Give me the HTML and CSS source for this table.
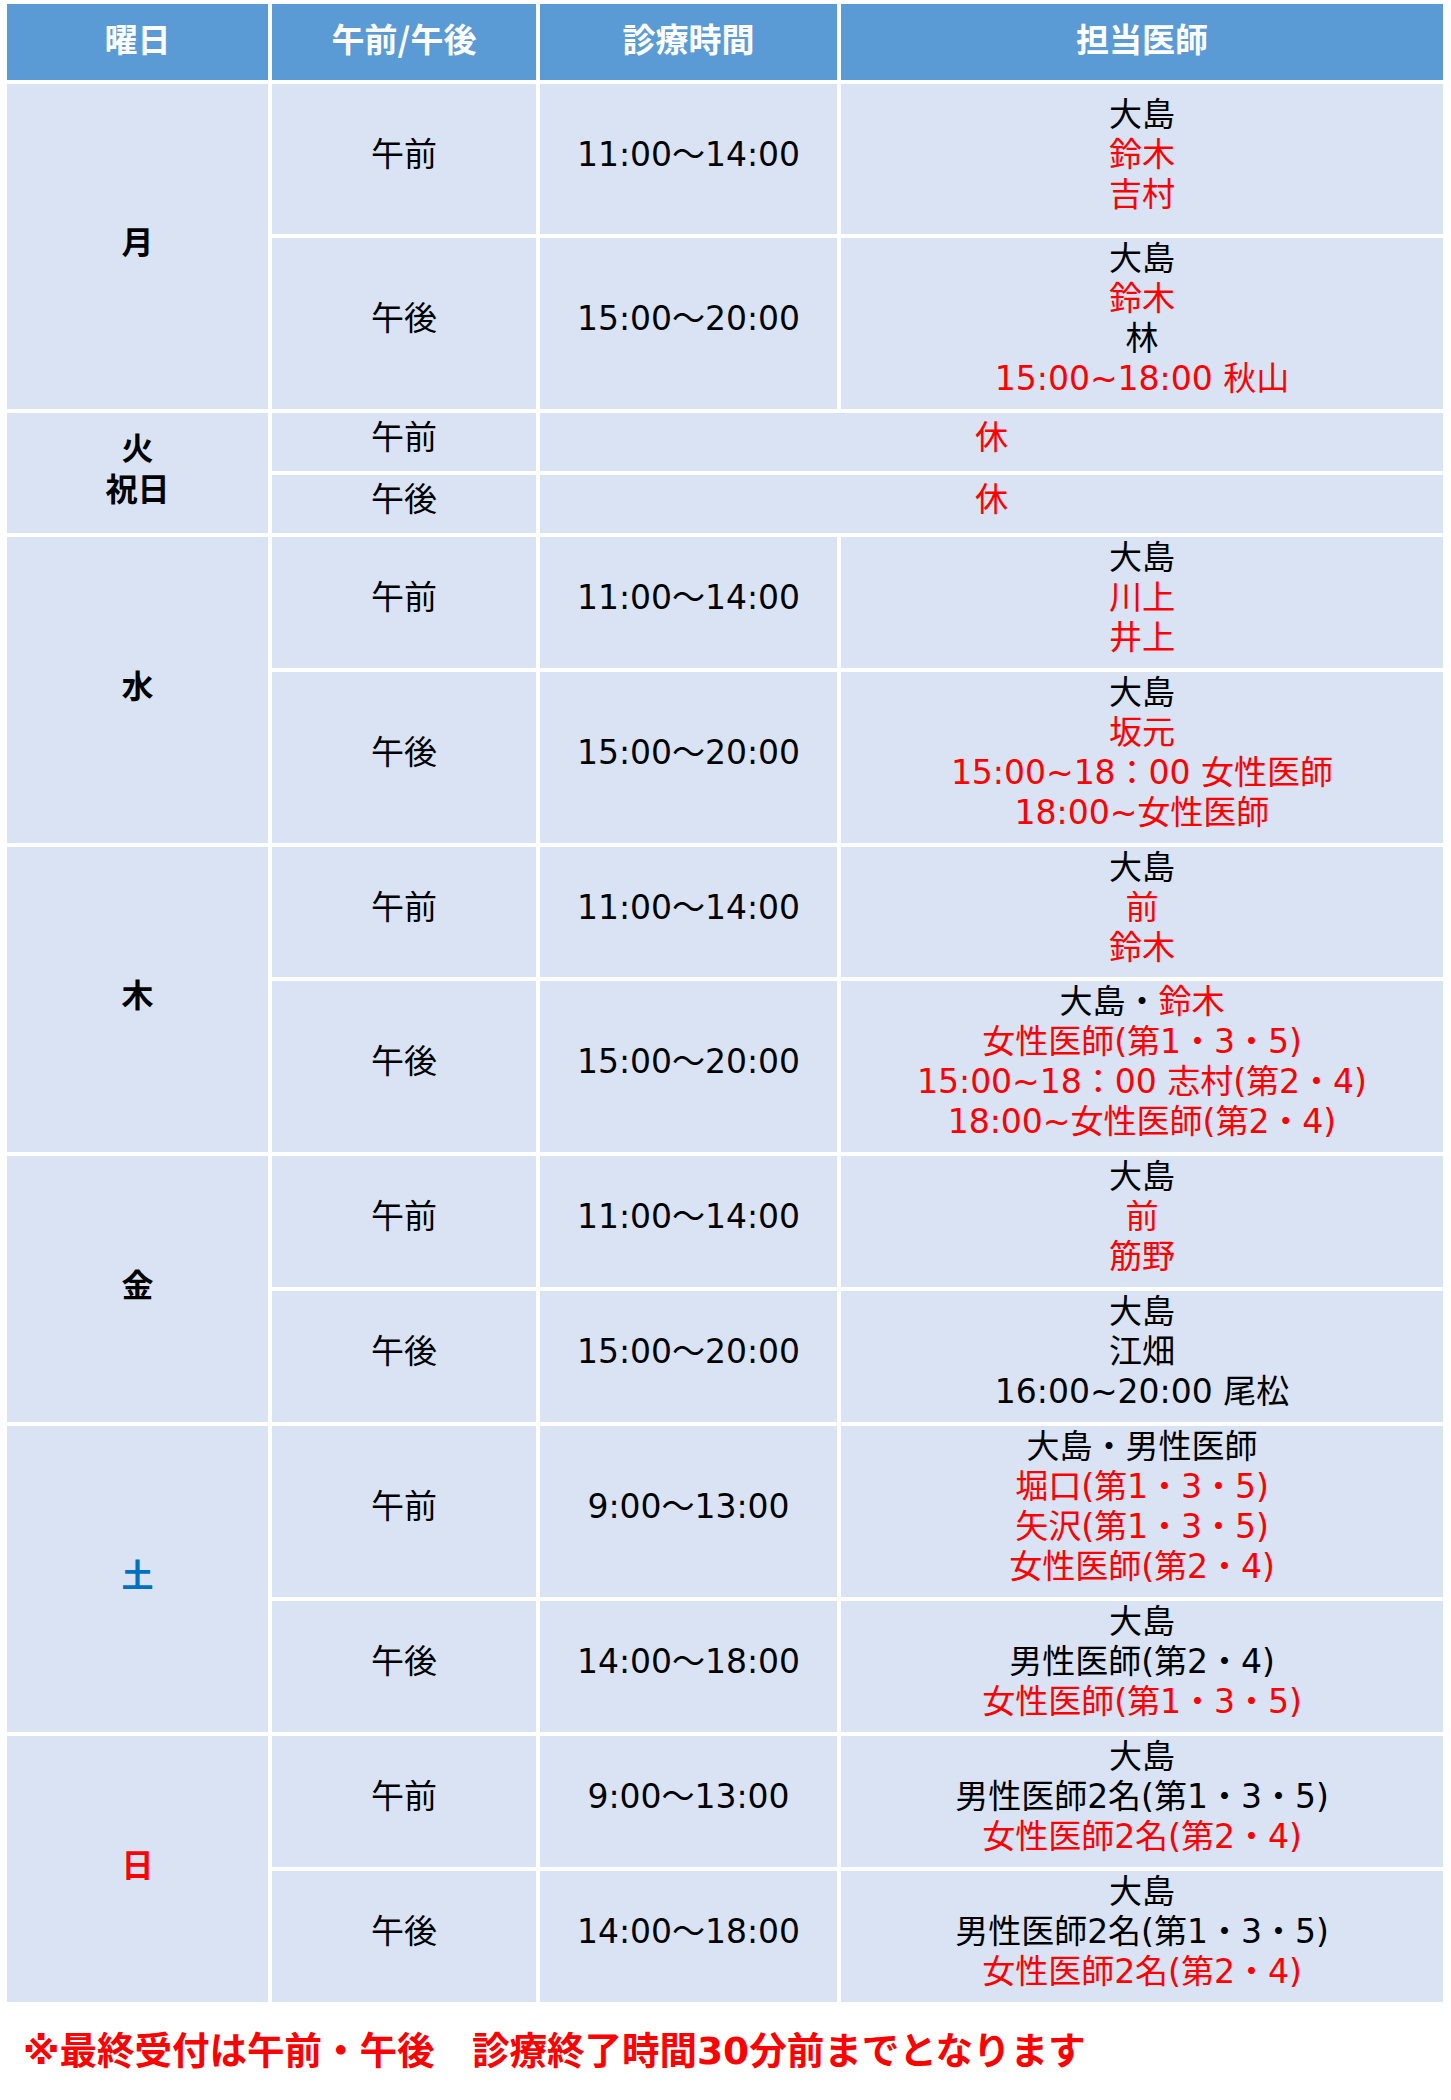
FILE: index.html
```html
<!DOCTYPE html>
<html lang="ja">
<head>
<meta charset="utf-8">
<link rel="stylesheet" href="styles.css">
</head>
<body>
<table class="schedule">
  <colgroup>
    <col class="c-day"><col class="c-ampm"><col class="c-time"><col class="c-doc">
  </colgroup>
  <thead>
    <tr class="h-head">
      <th>曜日</th><th>午前/午後</th><th>診療時間</th><th>担当医師</th>
    </tr>
  </thead>
  <tbody>
    <tr class="h-150">
      <td class="day" rowspan="2">月</td>
      <td class="ampm">午前</td>
      <td class="time">11:00～14:00</td>
      <td class="doc"><div>大島</div><div class="red">鈴木</div><div class="red">吉村</div></td>
    </tr>
    <tr class="h-171">
      <td class="ampm">午後</td>
      <td class="time">15:00～20:00</td>
      <td class="doc"><div>大島</div><div class="red">鈴木</div><div>林</div><div class="red">15:00~18:00 秋山</div></td>
    </tr>
    <tr class="h-58">
      <td class="day" rowspan="2">火<br>祝日</td>
      <td class="ampm">午前</td>
      <td class="closed red" colspan="2">休</td>
    </tr>
    <tr class="h-58">
      <td class="ampm">午後</td>
      <td class="closed red" colspan="2">休</td>
    </tr>
    <tr class="h-131">
      <td class="day" rowspan="2">水</td>
      <td class="ampm">午前</td>
      <td class="time">11:00～14:00</td>
      <td class="doc"><div>大島</div><div class="red">川上</div><div class="red">井上</div></td>
    </tr>
    <tr class="h-171">
      <td class="ampm">午後</td>
      <td class="time">15:00～20:00</td>
      <td class="doc"><div>大島</div><div class="red">坂元</div><div class="red">15:00~18：00 女性医師</div><div class="red">18:00~女性医師</div></td>
    </tr>
    <tr class="h-130">
      <td class="day" rowspan="2">木</td>
      <td class="ampm">午前</td>
      <td class="time">11:00～14:00</td>
      <td class="doc"><div>大島</div><div class="red">前</div><div class="red">鈴木</div></td>
    </tr>
    <tr class="h-171">
      <td class="ampm">午後</td>
      <td class="time">15:00～20:00</td>
      <td class="doc"><div>大島・<span class="red">鈴木</span></div><div class="red">女性医師(第1・3・5)</div><div class="red">15:00~18：00 志村(第2・4)</div><div class="red">18:00~女性医師(第2・4)</div></td>
    </tr>
    <tr class="h-131">
      <td class="day" rowspan="2">金</td>
      <td class="ampm">午前</td>
      <td class="time">11:00～14:00</td>
      <td class="doc"><div>大島</div><div class="red">前</div><div class="red">筋野</div></td>
    </tr>
    <tr class="h-131">
      <td class="ampm">午後</td>
      <td class="time">15:00～20:00</td>
      <td class="doc"><div>大島</div><div>江畑</div><div>16:00~20:00 尾松</div></td>
    </tr>
    <tr class="h-171">
      <td class="day blue" rowspan="2">土</td>
      <td class="ampm">午前</td>
      <td class="time">9:00～13:00</td>
      <td class="doc"><div>大島・男性医師</div><div class="red">堀口(第1・3・5)</div><div class="red">矢沢(第1・3・5)</div><div class="red">女性医師(第2・4)</div></td>
    </tr>
    <tr class="h-131">
      <td class="ampm">午後</td>
      <td class="time">14:00～18:00</td>
      <td class="doc"><div>大島</div><div>男性医師(第2・4)</div><div class="red">女性医師(第1・3・5)</div></td>
    </tr>
    <tr class="h-131">
      <td class="day red" rowspan="2">日</td>
      <td class="ampm">午前</td>
      <td class="time">9:00～13:00</td>
      <td class="doc"><div>大島</div><div>男性医師2名(第1・3・5)</div><div class="red">女性医師2名(第2・4)</div></td>
    </tr>
    <tr class="h-131">
      <td class="ampm">午後</td>
      <td class="time">14:00～18:00</td>
      <td class="doc"><div>大島</div><div>男性医師2名(第1・3・5)</div><div class="red">女性医師2名(第2・4)</div></td>
    </tr>
  </tbody>
</table>
<p class="note">※最終受付は午前・午後　診療終了時間30分前までとなります</p>
</body>
</html>
```

FILE: styles.css
```css
html, body {
  margin: 0;
  padding: 0;
  background: #ffffff;
}

body {
  padding: 0 4px 0 3px;
  font-family: "DejaVu Sans", "Noto Sans CJK JP", sans-serif;
  color: #000000;
}

.schedule {
  width: 1444px;
  border-collapse: separate;
  border-spacing: 4px;
  table-layout: fixed;
}

.c-day { width: 261px; }
.c-ampm { width: 264px; }
.c-time { width: 297px; }
.c-doc { width: auto; }

.schedule th {
  background: #5b9bd5;
  color: #ffffff;
  font-family: "Noto Sans CJK JP", sans-serif;
  font-weight: 700;
  font-size: 33px;
  line-height: 40px;
  text-align: center;
  vertical-align: middle;
  padding: 0 0 8px;
}

.schedule td {
  background: #dae3f3;
  text-align: center;
  vertical-align: middle;
  padding: 0 0 9px;
  font-size: 33px;
  line-height: 40px;
  font-weight: 400;
}

.h-head { height: 76px; }
.h-150 { height: 150px; }
.h-171 { height: 171px; }
.h-131 { height: 131px; }
.h-130 { height: 130px; }
.h-58 { height: 58px; }

.schedule td.day {
  font-family: "Noto Sans CJK JP", sans-serif;
  font-weight: 700;
  font-size: 32px;
  line-height: 41px;
  padding-bottom: 12px;
}

.red { color: #ff0000; }
.blue { color: #0070c0; }

.note {
  margin: 20px 0 0 20px;
  font-family: "DejaVu Sans", "Noto Sans CJK JP", sans-serif;
  font-size: 37.5px;
  line-height: 50px;
  font-weight: 700;
  color: #ff0000;
}
```
